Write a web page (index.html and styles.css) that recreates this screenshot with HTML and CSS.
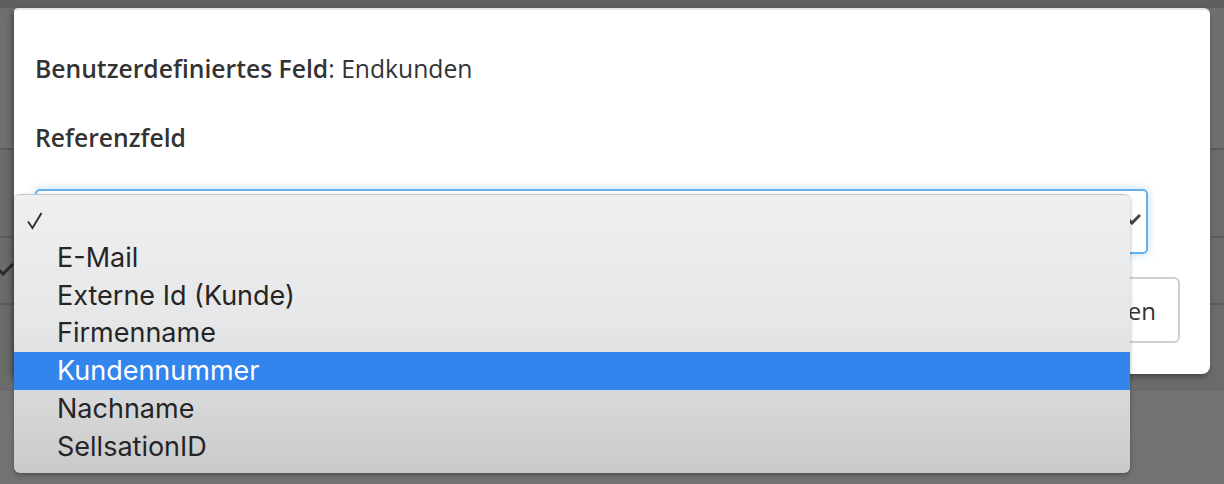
FILE: index.html
```html
<!DOCTYPE html>
<html lang="de">
<head>
  <meta charset="UTF-8">
  <meta name="viewport" content="width=device-width, initial-scale=1.0">
  <title>Benutzerdefiniertes Feld</title>
  <link rel="stylesheet" href="styles.css">
</head>
<body>
  <div class="page">
    <div class="page-top"></div>
    <div class="page-row"></div>
    <div class="page-row page-row-check">
      <svg class="row-check" width="14" height="14" viewBox="0 0 14 14"><path d="M-2 7 L3 12 L13 2" fill="none" stroke="#2a2a2a" stroke-width="3"/></svg>
    </div>
    <div class="page-row"></div>
  </div>

  <div class="modal">
    <div class="modal-body">
      <p class="field-title"><strong>Benutzerdefiniertes Feld</strong>: Endkunden</p>
      <label class="field-label">Referenzfeld</label>
      <div class="select-box">
        <svg class="select-arrow" width="14" height="12" viewBox="0 0 14 12"><path d="M1 6 L5 10 L13 2" fill="none" stroke="#444" stroke-width="3"/></svg>
      </div>
      <div class="button-row">
        <button class="btn">Abbrechen</button>
      </div>
    </div>
  </div>

  <div class="menu">
    <div class="menu-item">
      <svg class="menu-check" width="16" height="18" viewBox="0 0 16 18"><path d="M1 9.5 L5.5 16 L14.5 1" fill="none" stroke="#333" stroke-width="2"/></svg>
    </div>
    <div class="menu-item">E-Mail</div>
    <div class="menu-item">Externe Id (Kunde)</div>
    <div class="menu-item">Firmenname</div>
    <div class="menu-item active">Kundennummer</div>
    <div class="menu-item">Nachname</div>
    <div class="menu-item">SellsationID</div>
  </div>
</body>
</html>
```

FILE: styles.css
```css
* {
  margin: 0;
  padding: 0;
  box-sizing: border-box;
}

body {
  font-family: 'Open Sans', 'Noto Sans', sans-serif;
  background: #727272;
  height: 484px;
  overflow: hidden;
  position: relative;
  color: #333;
}

.page-top {
  height: 148px;
  background: #6f6f6f;
  border-top: 8px solid #5f5f5f;
}

.page-row {
  height: 88px;
  border-top: 2px solid #5c5c5c;
  background: #6b6b6b;
}

.page-row-check {
  height: 67px;
  position: relative;
}

.row-check {
  position: absolute;
  left: 0;
  top: 24px;
}

.modal {
  position: absolute;
  left: 14px;
  top: 8px;
  width: 1196px;
  height: 366px;
  background: #fff;
  border-top: 2px solid #e4e4e4;
  border-radius: 4px 6px 8px 2px;
  box-shadow: -2px 3px 6px rgba(0, 0, 0, 0.35);
}

.modal-body {
  padding: 42px 21px 0 21px;
}

.field-title {
  font-size: 24.7px;
  line-height: 34px;
  color: #333;
}

.field-title strong {
  font-weight: 600;
}

.field-label {
  display: block;
  margin-top: 35px;
  font-size: 24.7px;
  line-height: 34px;
  font-weight: 600;
  color: #333;
}

.select-box {
  margin-top: 34px;
  width: 1113px;
  height: 65px;
  border: 2px solid #66afe9;
  border-radius: 5px;
  box-shadow: 0 0 10px rgba(102, 175, 233, 0.45);
  display: flex;
  align-items: center;
  justify-content: flex-end;
  padding-right: 5px;
}

.select-arrow {
  margin-top: -6px;
}

.button-row {
  display: flex;
  justify-content: flex-end;
  margin-top: 23px;
  padding-right: 9px;
}

.btn {
  height: 66px;
  padding: 0 22px;
  background: #fff;
  border: 2px solid #d0d0d0;
  border-radius: 6px;
  font-family: 'Open Sans', 'Noto Sans', sans-serif;
  font-size: 24px;
  color: #333;
}

.menu {
  position: absolute;
  left: 14px;
  top: 194px;
  width: 1116px;
  height: 279px;
  padding-top: 6px;
  background: linear-gradient(#efefef, #e6e7e9 45%, #cacaca);
  border-top: 1px solid #c4c4c4;
  border-radius: 6px;
  box-shadow: 0 2px 4px rgba(0, 0, 0, 0.3);
  font-family: Inter, 'Noto Sans', sans-serif;
}

.menu-item {
  height: 37.8px;
  line-height: 37.8px;
  padding-left: 43px;
  font-size: 27px;
  color: #252525;
  position: relative;
}

.menu-item.active {
  background: #3385ee;
  color: #fff;
}

.menu-check {
  position: absolute;
  left: 13px;
  top: 11px;
}
```
